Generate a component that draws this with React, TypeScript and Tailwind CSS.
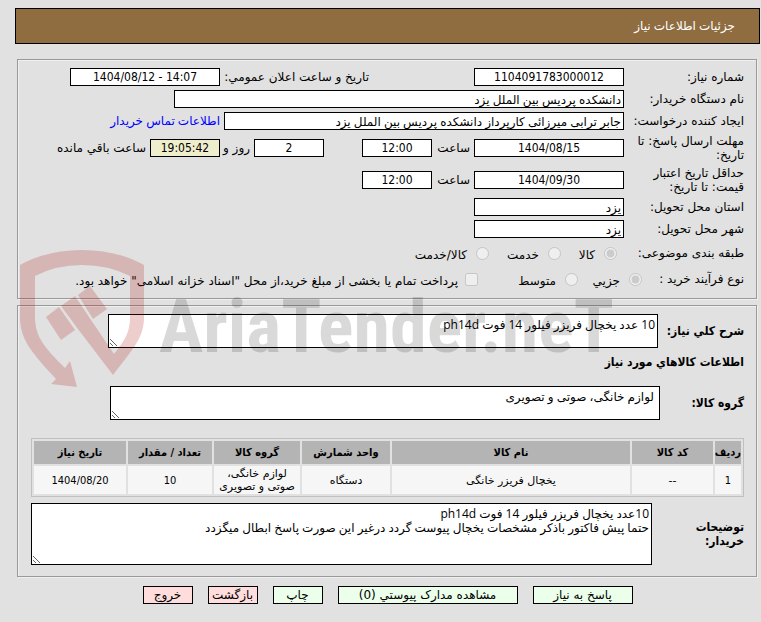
import type { ReactNode } from "react";

const box = "h-[18px] border border-black px-0.5 text-xs leading-4 outline-none";
const numeric = "font-['DejaVu_Sans_Condensed','DejaVu_Sans',sans-serif]";
const prose = "font-['Open_Sans','DejaVu_Sans',sans-serif]";
const area = `resize border border-black bg-white py-[3px] leading-[14px] ${prose}`;

function Field({ id, value, width, center, tone }: { id: string; value: string; width: string; center?: boolean; tone?: string }) {
  return (
    <input
      id={id}
      readOnly
      dir={center ? "ltr" : "rtl"}
      value={value}
      className={`${box} ${width} ${center ? `text-center ${numeric}` : `text-right ${prose}`} ${tone ?? "bg-white"}`}
    />
  );
}

function Row({ htmlFor, label, height, children }: { htmlFor?: string; label: string; height: string; children: ReactNode }) {
  return (
    <div className={`flex items-center ${height}`}>
      <label htmlFor={htmlFor} className="w-[120px] shrink-0 pl-2 leading-[14px]">
        {label}
      </label>
      {children}
    </div>
  );
}

function Choice({ name, label, checked, width }: { name: string; label: string; checked?: boolean; width: string }) {
  return (
    <label className={`flex items-center gap-[9px] whitespace-nowrap ${width}`}>
      <input type="radio" name={name} defaultChecked={checked} disabled className="size-[13px] shrink-0" />
      <span className="pt-1">{label}</span>
    </label>
  );
}

const columns = [
  { title: "ردیف", value: "1", width: "w-[26px]" },
  { title: "کد کالا", value: "--", width: "w-[81px]" },
  { title: "نام کالا", value: "یخچال فریزر خانگی", width: "w-auto" },
  { title: "واحد شمارش", value: "دستگاه", width: "w-[88px]" },
  { title: "گروه کالا", value: "لوازم خانگی، صوتی و تصویری", width: "w-[86px]" },
  { title: "تعداد / مقدار", value: "10", width: "w-[84px]" },
  { title: "تاریخ نیاز", value: "1404/08/20", width: "w-[92px]" },
];

const actions = [
  { text: "پاسخ به نیاز", style: "w-[100px] bg-[#ebffeb]" },
  { text: "مشاهده مدارک پیوستي (0)", style: "w-[180px] bg-[#ebffeb]" },
  { text: "چاپ", style: "w-[50px] bg-[#ebffeb]" },
  { text: "بازگشت", style: "w-[50px] bg-[#ffdddd]" },
  { text: "خروج", style: "w-[50px] bg-[#ffdddd]" },
];

function Watermark() {
  return (
    <svg aria-hidden="true" viewBox="0 0 620 150" className="pointer-events-none absolute top-[245px] left-[15px] h-[150px] w-[620px]" direction="ltr">
      <g fill="#aa0406" fillOpacity="0.2">
        <path d="M5 20 Q32 5 67 5 Q102 5 129 20 V72 C129 92 119 103 98 130 L63 84 L76 75 L99 109 C111 94 115 86 115 72 V31 Q93 20 67 20 Q41 20 20 31 V72 C20 92 30 103 50 123 L55 116 L62 142 L36 139 L41 134 C16 107 5 94 5 72 Z" />
        <path d="M31 72 L44 62 L60 85 L46 95 Z" />
        <path d="M46 61 L60 51 L76 75 L63 84 Z" />
        <path d="M63 50 L75 41 L92 64 L78 74 Z" />
      </g>
      <text x="144" y="107" fill="#000" fillOpacity="0.15" fontSize="74" fontWeight="700" fontFamily="'Roboto Condensed', Roboto, sans-serif">
        AriaTender.neT
      </text>
    </svg>
  );
}

export default function App() {
  const frame = "mr-[3px] ml-[2px] border border-[#999] pr-3 pl-[13px] shadow-[1px_1px_0_#f0f0f0,inset_1px_1px_0_#f0f0f0]";
  return (
    <main dir="rtl" lang="fa" className="relative min-h-screen bg-[#e1e1e1] pt-2 pr-px pb-4 pl-[15px] font-['DejaVu_Sans',sans-serif] text-xs text-black">
      <h1 className={`flex h-9 items-center border border-black bg-[#8f6d40] pr-6 text-xs font-normal text-white ${prose}`}>جزئیات اطلاعات نیاز</h1>

      <section className={`${frame} mt-[15px] pt-1.5 pb-1.5`}>
        <Row htmlFor="no" label="شماره نیاز:" height="h-[22px]">
          <Field id="no" value="1104091783000012" width="w-[150px]" center />
          <label htmlFor="announce" className="mr-[105px] w-[149px] whitespace-nowrap">تاریخ و ساعت اعلان عمومي:</label>
          <Field id="announce" value="1404/08/12 - 14:07" width="w-[150px]" center />
        </Row>
        <Row htmlFor="org" label="نام دستگاه خریدار:" height="h-[22px]">
          <Field id="org" value="دانشکده پردیس بین الملل یزد" width="w-[450px]" />
        </Row>
        <Row htmlFor="creator" label="ایجاد کننده درخواست:" height="h-[22px]">
          <Field id="creator" value="جابر ترابی میرزائی کارپرداز دانشکده پردیس بین الملل یزد" width="w-[400px]" />
          <a href="#contact" className={`mr-1 whitespace-nowrap text-[#0000ff] ${prose}`}>اطلاعات تماس خریدار</a>
        </Row>
        <Row htmlFor="reply" label="مهلت ارسال پاسخ: تا تاریخ:" height="h-8">
          <Field id="reply" value="1404/08/15" width="w-[150px]" center />
          <label htmlFor="replyHour" className="w-[42px] pr-1">ساعت</label>
          <Field id="replyHour" value="12:00" width="w-[70px]" center />
          <span className="w-[38px]" />
          <Field id="days" value="2" width="w-[70px]" center />
          <label htmlFor="days" className="w-[34px] pr-1 whitespace-nowrap">روز و</label>
          <Field id="left" value="19:05:42" width="w-[70px]" center tone="bg-[#eeeecc]" />
          <label htmlFor="left" className="pr-1 whitespace-nowrap">ساعت باقي مانده</label>
        </Row>
        <Row htmlFor="valid" label="حداقل تاریخ اعتبار قیمت: تا تاریخ:" height="h-8">
          <Field id="valid" value="1404/09/30" width="w-[150px]" center />
          <label htmlFor="validHour" className="w-[42px] pr-1">ساعت</label>
          <Field id="validHour" value="12:00" width="w-[70px]" center />
        </Row>
        <Row htmlFor="province" label="استان محل تحویل:" height="h-[22px]">
          <Field id="province" value="یزد" width="w-[150px]" />
        </Row>
        <Row htmlFor="city" label="شهر محل تحویل:" height="h-[22px]">
          <Field id="city" value="یزد" width="w-[150px]" />
        </Row>
        <div className="flex h-[26px] items-center">
          <span className="w-[127px]">طبقه بندی موضوعی:</span>
          <Choice name="subject" label="کالا" checked width="w-[56px]" />
          <Choice name="subject" label="خدمت" width="w-[72px]" />
          <Choice name="subject" label="کالا/خدمت" width="w-[90px]" />
        </div>
        <div className="flex h-[26px] items-center">
          <span className="w-[102px]">نوع فرآیند خرید :</span>
          <Choice name="process" label="جزیي" checked width="w-[64px]" />
          <Choice name="process" label="متوسط" width="w-[100px]" />
          <label className="flex items-center gap-[7px] whitespace-nowrap">
            <input type="checkbox" disabled className="size-[13px]" />
            <span className="pt-1">پرداخت تمام یا بخشی از مبلغ خرید،از محل "اسناد خزانه اسلامی" خواهد بود.</span>
          </label>
        </div>
      </section>

      <section className={`${frame} mt-1.5 pt-2 pb-[11px]`}>
        <div className="flex items-center">
          <label htmlFor="summary" className={`w-[86px] font-bold whitespace-nowrap ${numeric}`}>شرح كلي نياز:</label>
          <textarea id="summary" readOnly className={`h-[34px] w-[550px] px-0.5 ${area}`} defaultValue="10 عدد یخچال فریزر فیلور 14 فوت ph14d" />
        </div>
        <h2 className={`mt-1.5 text-xs leading-4 font-bold ${numeric}`}>اطلاعات كالاهاي مورد نياز</h2>
        <div className="mt-4 flex items-center">
          <label htmlFor="group" className={`w-[84px] font-bold whitespace-nowrap ${numeric}`}>گروه کالا:</label>
          <textarea id="group" readOnly className={`h-[34px] w-[550px] px-[5px] ${area}`} defaultValue="لوازم خانگی، صوتی و تصویری" />
        </div>
        <table className="mt-[18px] w-full table-fixed border-separate border-spacing-[2px] border border-[#c0c0c0] text-center text-[11px] leading-[13px]">
          <thead>
            <tr className="h-[23px]">
              {columns.map((c) => (
                <th key={c.title} className={`${c.width} ${numeric} bg-[#b4b4b4] p-0 font-bold whitespace-nowrap`}>{c.title}</th>
              ))}
            </tr>
          </thead>
          <tbody>
            <tr className="h-[28px]">
              {columns.map((c) => (
                <td key={c.title} className={`bg-[#f6f6f6] p-0 ${/\d/.test(c.value) ? numeric : ""}`}>{c.value}</td>
              ))}
            </tr>
          </tbody>
        </table>
        <div className="mt-1.5 flex items-center">
          <label htmlFor="notes" className={`w-[92px] pl-4 leading-[14px] font-bold ${numeric}`}>توضیحات خریدار:</label>
          <textarea id="notes" readOnly className={`h-[62px] flex-1 px-0.5 ${area}`} defaultValue={"10عدد یخچال فریزر فیلور 14 فوت ph14d\nحتما پیش فاکتور باذکر مشخصات یخچال پیوست گردد درغیر این صورت پاسخ ابطال میگزدد"} />
        </div>
      </section>

      <div className="mt-[9px] flex justify-center gap-[15px]">
        {actions.map((a) => (
          <button key={a.text} type="button" className={`h-[18px] border border-black text-xs leading-4 whitespace-nowrap ${a.style}`}>{a.text}</button>
        ))}
      </div>
      <Watermark />
    </main>
  );
}
